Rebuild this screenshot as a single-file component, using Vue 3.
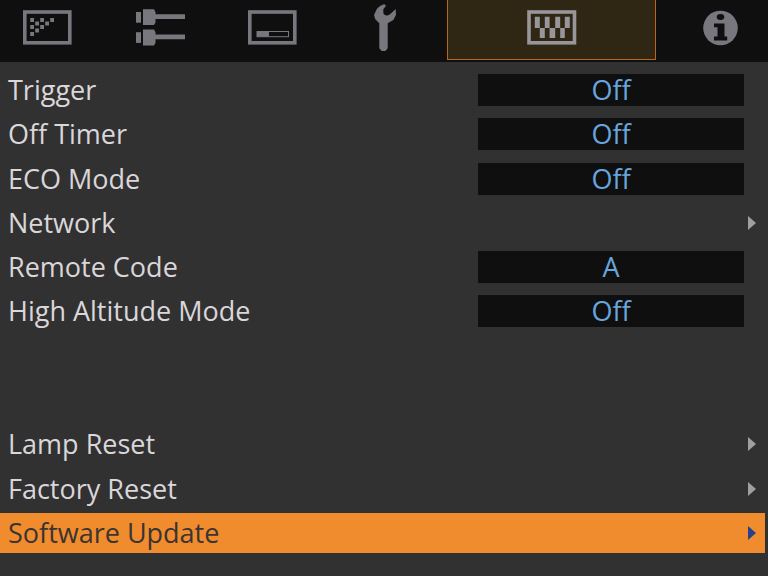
<script setup>
import { ref } from 'vue'

const tabs = [
  { id: 'image', label: 'Image' },
  { id: 'input', label: 'Input' },
  { id: 'display', label: 'Display' },
  { id: 'tools', label: 'Tools' },
  { id: 'system', label: 'System' },
  { id: 'info', label: 'Information' },
]
const activeTab = ref('system')

const settings = ref([
  { id: 'trigger', label: 'Trigger', value: 'Off', options: ['Off', 'On'] },
  { id: 'off-timer', label: 'Off Timer', value: 'Off', options: ['Off', 'On'] },
  { id: 'eco-mode', label: 'ECO Mode', value: 'Off', options: ['Off', 'On'] },
  { id: 'network', label: 'Network' },
  { id: 'remote-code', label: 'Remote Code', value: 'A', options: ['A', 'B'] },
  { id: 'altitude', label: 'High Altitude Mode', value: 'Off', options: ['Off', 'On'] },
])

const actions = [
  { id: 'lamp-reset', label: 'Lamp Reset' },
  { id: 'factory-reset', label: 'Factory Reset' },
  { id: 'software-update', label: 'Software Update' },
]
const selected = ref('software-update')

// test pattern dots of the image tab
const dots = [
  [10, 16], [20, 16], [30, 16],
  [15, 19.5], [25, 19.5],
  [10, 23], [20, 23],
  [15, 26.5],
  [10, 30],
]
</script>

<template>
  <div class="osd">
    <header class="top">
      <nav class="tabs">
        <button
          v-for="tab in tabs"
          :key="tab.id"
          class="tab"
          :class="{ active: tab.id === activeTab }"
          :aria-label="tab.label"
          @click="activeTab = tab.id"
        >
          <svg class="icon" viewBox="0 0 50 48" aria-hidden="true">
            <g v-if="tab.id === 'image'">
              <rect class="frame" x="2.8" y="8" width="45" height="30.8" />
              <rect v-for="([x, y], i) in dots" :key="i" :x="x - 1.8" :y="y - 2" width="3.8" height="4" />
            </g>
            <g v-else-if="tab.id === 'input'">
              <rect x="1" y="8" width="5" height="10.7" />
              <path d="M8 5.3H19L20.5 8V10.3H50V15H20.5V18.5L19 21H8Z" />
              <rect x="1" y="28.2" width="5" height="10.7" />
              <path d="M8 25.5H19L20.5 28.2V30.5H50V35.2H20.5V38.7L19 41.4H8Z" />
            </g>
            <g v-else-if="tab.id === 'display'">
              <rect class="frame" x="2.8" y="8" width="45" height="30.8" />
              <rect class="thin" x="10" y="27.5" width="31.5" height="5.2" />
              <rect x="10" y="27.5" width="12" height="5.2" />
            </g>
            <path
              v-else-if="tab.id === 'tools'"
              d="M24.3 .3C21 1 18.5 3 16.7 5.3L14 11L15.3 15.3L19.3 19.3V44.3L21.7 47H25.3L27.7 44.3V19.3L33.3 16L36 11L35.7 5L30 10.3C28.5 11.5 27 11.8 25.7 11.3C24 10.7 23.3 9.8 23.3 8.2V5.3L26 1.7Z"
            />
            <g v-else-if="tab.id === 'system'">
              <rect class="frame" x="2" y="8" width="45.5" height="30.8" />
              <path
                d="M7.8 12.7h5V24h-5ZM17.8 12.7h4.8V24h-4.8ZM28.2 12.7h5V24h-5ZM37.8 12.7h5V24h-5ZM12.8 24h5v10h-5ZM22.6 24h5.6v10h-5.6ZM33.2 24h4.6v10h-4.6Z"
              />
            </g>
            <g v-else>
              <circle cx="24.5" cy="24" r="17.3" />
              <ellipse class="cut" cx="24.5" cy="13" rx="3.8" ry="2.9" />
              <path class="cut" d="M18 19.5H28.5V32.5H31.2V36.4H18V32.5H21.5V23.2H18Z" />
            </g>
          </svg>
        </button>
      </nav>
    </header>

    <main class="menu">
      <template v-for="item in settings" :key="item.id">
        <div v-if="item.options" class="row">
          <label :for="item.id">{{ item.label }}</label>
          <select :id="item.id" v-model="item.value" class="value">
            <option v-for="option in item.options" :key="option">{{ option }}</option>
          </select>
        </div>
        <button v-else class="row" :class="{ selected: item.id === selected }" @click="selected = item.id">
          {{ item.label }}
          <svg class="arrow" viewBox="0 0 8 14" aria-hidden="true"><path d="M0 0L8 7L0 14Z" /></svg>
        </button>
      </template>

      <div class="spacer"></div>

      <button
        v-for="action in actions"
        :key="action.id"
        class="row"
        :class="{ selected: action.id === selected }"
        @click="selected = action.id"
      >
        {{ action.label }}
        <svg class="arrow" viewBox="0 0 8 14" aria-hidden="true"><path d="M0 0L8 7L0 14Z" /></svg>
      </button>
    </main>
  </div>
</template>

<style>
body {
  margin: 0;
  background: #313131;
}
</style>

<style scoped>
.osd {
  display: flex;
  flex-direction: column;
  min-height: 100vh;
  background: #313131;
  color: #dad6da;
  font-family: 'Open Sans', 'Noto Sans', sans-serif;
  font-size: 27px;
  font-weight: 500;
  line-height: 32px;
}

button,
select {
  box-sizing: border-box;
  border: none;
  border-radius: 0;
  background: none;
  color: inherit;
  font: inherit;
  cursor: pointer;
}

.top {
  height: 62px;
  overflow: hidden;
  background: #0f0f0f;
}

/* the strip runs a little past both edges of the screen */
.tabs {
  display: grid;
  grid-template-columns: repeat(4, 1fr) 223px 1fr;
  margin: 0 -9px;
}

.tab {
  display: flex;
  justify-content: center;
  height: 60px;
  padding: 4px 0 0;
  border: 1px solid transparent;
  border-top: none;
}

.tab.active {
  margin: 0 8px 0 6px;
  border-color: #b8661a;
  background: #2f2613;
}

.icon {
  width: 50px;
  height: 48px;
  fill: #79777e;
  stroke: #79777e;
  stroke-width: 0;
}

.active .icon {
  fill: #98969b;
  stroke: #98969b;
}

.icon .frame {
  fill: none;
  stroke-width: 3.6px;
}

.icon .thin {
  fill: none;
  stroke-width: 1px;
}

.icon .cut {
  fill: #0f0f0f;
}

.menu {
  display: grid;
  flex: 1;
  grid-template-rows: repeat(6, 1fr) 2fr repeat(3, 1fr);
  padding: 6px 0 21px;
}

.row {
  display: flex;
  align-items: center;
  justify-content: space-between;
  margin: 2px 3px 2px 0;
  padding: 0 9px 0 8px;
  text-align: left;
}

.row.selected {
  background: #f18c2e;
  color: #3a3432;
}

.value {
  width: 266px;
  height: 32px;
  margin-right: 12px;
  padding: 0;
  appearance: none;
  background: #0f0f0f;
  color: #67a5dc;
  text-align: center;
  text-align-last: center;
}

.arrow {
  width: 8px;
  height: 14px;
  fill: #a09ea3;
}

.selected .arrow {
  fill: #25418c;
}
</style>
